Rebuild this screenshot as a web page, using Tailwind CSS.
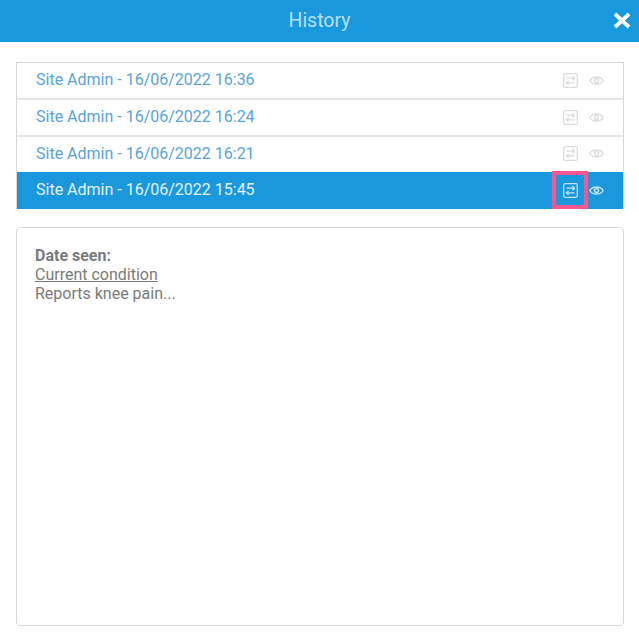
<!DOCTYPE html>
<html lang="en">
  <head>
    <meta charset="UTF-8" />
    <title>History</title>
    <script src="https://cdn.jsdelivr.net/npm/@tailwindcss/browser@4"></script>
  </head>
  <body class="bg-white font-['Roboto',sans-serif] w-[639px] h-[641px] overflow-hidden">
    <header class="relative h-[42px] bg-[#1a98de] flex items-center justify-center pb-[1px]">
      <h1 class="text-[19.5px] text-[#b5e0f7]">History</h1>
      <svg class="absolute right-[8px] top-[12px] w-[18px] h-[17px]" viewBox="0 0 18 17" fill="none" stroke="white" stroke-width="3.8">
        <path d="M2 2 L16 15 M16 2 L2 15" />
      </svg>
    </header>

    <div class="px-[16px] pt-[20px]">
      <ul class="w-[608px] border border-[#d8d8d8] border-b-0 text-[16px] text-[#5ba3d6]">
        <li class="h-[37px] pl-[19px] pr-[19.5px] pb-[1px] flex items-center justify-between border-b-2 border-[#e4e4e4]">
          <span>Site Admin - 16/06/2022 16:36</span>
          <div class="flex items-center gap-[11px] text-[#dcdcdc]">
            <svg class="w-[15px] h-[15px]" viewBox="0 0 15 15" fill="none" stroke="currentColor" stroke-width="1.3">
              <rect x="0.7" y="0.7" width="13.6" height="13.6" rx="1.5" />
              <path d="M3.5 5.2 H11.3 M9.4 3.2 L11.5 5.2 L9.4 7.2 M11.5 9.8 H3.7 M5.6 7.8 L3.5 9.8 L5.6 11.8" />
            </svg>
            <svg class="w-[15px] h-[15px]" viewBox="0 0 15 15" fill="none" stroke="currentColor" stroke-width="1.4">
              <path d="M0.8 7.5 C3.5 2.8 11.5 2.8 14.2 7.5 C11.5 12.2 3.5 12.2 0.8 7.5 Z" />
              <circle cx="7.5" cy="7.5" r="2" />
            </svg>
          </div>
        </li>
        <li class="h-[37px] pl-[19px] pr-[19.5px] pb-[1px] flex items-center justify-between border-b-2 border-[#e4e4e4]">
          <span>Site Admin - 16/06/2022 16:24</span>
          <div class="flex items-center gap-[11px] text-[#dcdcdc]">
            <svg class="w-[15px] h-[15px]" viewBox="0 0 15 15" fill="none" stroke="currentColor" stroke-width="1.3">
              <rect x="0.7" y="0.7" width="13.6" height="13.6" rx="1.5" />
              <path d="M3.5 5.2 H11.3 M9.4 3.2 L11.5 5.2 L9.4 7.2 M11.5 9.8 H3.7 M5.6 7.8 L3.5 9.8 L5.6 11.8" />
            </svg>
            <svg class="w-[15px] h-[15px]" viewBox="0 0 15 15" fill="none" stroke="currentColor" stroke-width="1.4">
              <path d="M0.8 7.5 C3.5 2.8 11.5 2.8 14.2 7.5 C11.5 12.2 3.5 12.2 0.8 7.5 Z" />
              <circle cx="7.5" cy="7.5" r="2" />
            </svg>
          </div>
        </li>
        <li class="h-[35px] pl-[19px] pr-[19.5px] pb-[2px] flex items-center justify-between">
          <span>Site Admin - 16/06/2022 16:21</span>
          <div class="flex items-center gap-[11px] text-[#dcdcdc]">
            <svg class="w-[15px] h-[15px]" viewBox="0 0 15 15" fill="none" stroke="currentColor" stroke-width="1.3">
              <rect x="0.7" y="0.7" width="13.6" height="13.6" rx="1.5" />
              <path d="M3.5 5.2 H11.3 M9.4 3.2 L11.5 5.2 L9.4 7.2 M11.5 9.8 H3.7 M5.6 7.8 L3.5 9.8 L5.6 11.8" />
            </svg>
            <svg class="w-[15px] h-[15px]" viewBox="0 0 15 15" fill="none" stroke="currentColor" stroke-width="1.4">
              <path d="M0.8 7.5 C3.5 2.8 11.5 2.8 14.2 7.5 C11.5 12.2 3.5 12.2 0.8 7.5 Z" />
              <circle cx="7.5" cy="7.5" r="2" />
            </svg>
          </div>
        </li>
        <li class="relative h-[37px] pl-[19px] pr-[19.5px] pb-[1px] flex items-center justify-between bg-[#1a98de] text-[#e4f3fb]">
          <span>Site Admin - 16/06/2022 15:45</span>
          <div class="flex items-center gap-[11px] text-[#c4e5f8]">
            <svg class="w-[15px] h-[15px]" viewBox="0 0 15 15" fill="none" stroke="currentColor" stroke-width="1.3">
              <rect x="0.7" y="0.7" width="13.6" height="13.6" rx="1.5" />
              <path d="M3.5 5.2 H11.3 M9.4 3.2 L11.5 5.2 L9.4 7.2 M11.5 9.8 H3.7 M5.6 7.8 L3.5 9.8 L5.6 11.8" />
            </svg>
            <svg class="w-[15px] h-[15px]" viewBox="0 0 15 15" fill="none" stroke="currentColor" stroke-width="1.4">
              <path d="M0.8 7.5 C3.5 2.8 11.5 2.8 14.2 7.5 C11.5 12.2 3.5 12.2 0.8 7.5 Z" />
              <circle cx="7.5" cy="7.5" r="2" />
            </svg>
          </div>
          <div class="absolute left-[535px] top-[-1px] w-[36px] h-[38px] border-[4px] border-[#f4588e]"></div>
        </li>
      </ul>

      <section class="mt-[18px] w-[608px] h-[399px] border border-[#d8d8d8] rounded-[4px] pl-[18px] pt-[18px] text-[16px] leading-[19px] text-[#7a7a7a]">
        <p class="font-bold">Date seen:</p>
        <p class="underline">Current condition</p>
        <p>Reports knee pain...</p>
      </section>
    </div>
  </body>
</html>
